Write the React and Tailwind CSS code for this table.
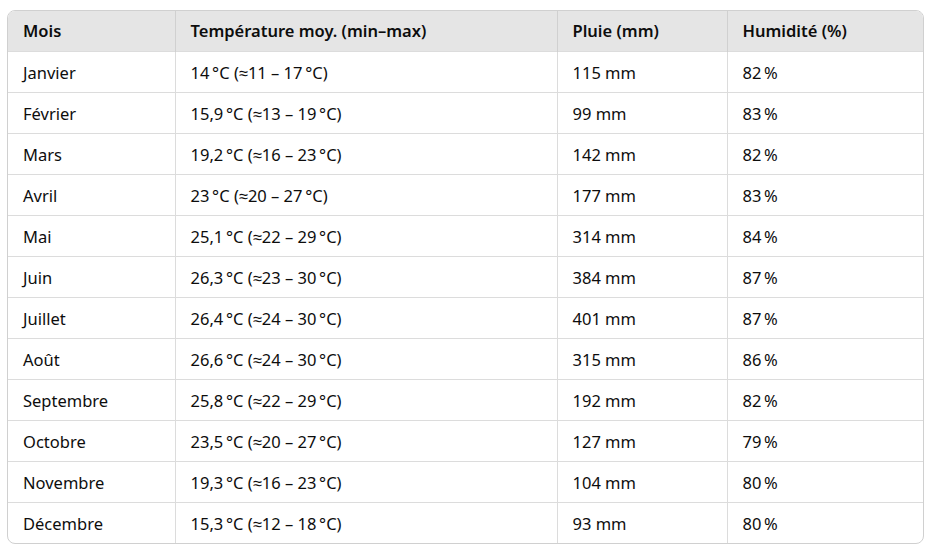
const rows = [
  ['Janvier', '14\u202F°C (≈11 – 17\u202F°C)', '115 mm', '82\u202F%'],
  ['Février', '15,9\u202F°C (≈13 – 19\u202F°C)', '99 mm', '83\u202F%'],
  ['Mars', '19,2\u202F°C (≈16 – 23\u202F°C)', '142 mm', '82\u202F%'],
  ['Avril', '23\u202F°C (≈20 – 27\u202F°C)', '177 mm', '83\u202F%'],
  ['Mai', '25,1\u202F°C (≈22 – 29\u202F°C)', '314 mm', '84\u202F%'],
  ['Juin', '26,3\u202F°C (≈23 – 30\u202F°C)', '384 mm', '87\u202F%'],
  ['Juillet', '26,4\u202F°C (≈24 – 30\u202F°C)', '401 mm', '87\u202F%'],
  ['Août', '26,6\u202F°C (≈24 – 30\u202F°C)', '315 mm', '86\u202F%'],
  ['Septembre', '25,8\u202F°C (≈22 – 29\u202F°C)', '192 mm', '82\u202F%'],
  ['Octobre', '23,5\u202F°C (≈20 – 27\u202F°C)', '127 mm', '79\u202F%'],
  ['Novembre', '19,3\u202F°C (≈16 – 23\u202F°C)', '104 mm', '80\u202F%'],
  ['Décembre', '15,3\u202F°C (≈12 – 18\u202F°C)', '93 mm', '80\u202F%'],
]

const cols = ['w-[167px]', 'w-[382px]', 'w-[170px]', 'w-auto']

export default function App() {
  return (
    <div className="min-h-screen bg-white pt-[10px] pl-[7px] pr-[6px] font-['Noto_Sans',sans-serif] text-[#0d0d0d]">
      <div className="border border-[#d0d0d0] rounded-lg overflow-hidden">
        <table className="w-full table-fixed border-collapse text-[16.5px]">
          <thead>
            <tr className="bg-[#e5e5e5] h-[40px]">
              {['Mois', 'Température moy. (min–max)', 'Pluie (mm)', 'Humidité (%)'].map((h, i) => (
                <th
                  key={h}
                  className={`${cols[i]} text-left font-semibold pl-[15px] pr-4 pt-[2px] ${i > 0 ? 'border-l border-[#d0d0d0]' : ''}`}
                >
                  {h}
                </th>
              ))}
            </tr>
          </thead>
          <tbody>
            {rows.map((r) => (
              <tr key={r[0]} className="h-[41px] border-t border-[#dcdcdc]">
                {r.map((c, i) => (
                  <td key={i} className={`pl-[15px] pr-4 pt-[3px] ${i > 0 ? 'border-l border-[#dcdcdc]' : ''}`}>
                    {c}
                  </td>
                ))}
              </tr>
            ))}
          </tbody>
        </table>
      </div>
    </div>
  )
}
